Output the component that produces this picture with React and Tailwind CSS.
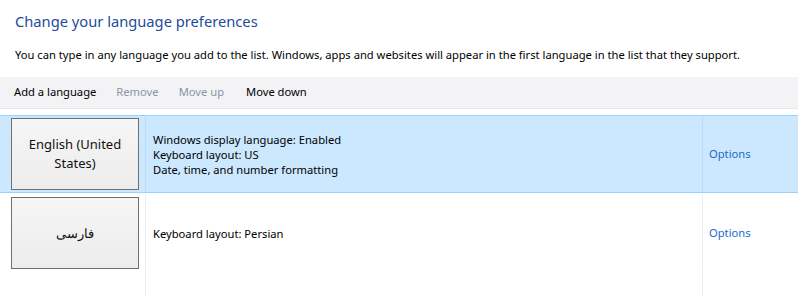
import React from 'react';

const font = { fontFamily: '"Noto Sans", "Liberation Sans", sans-serif' };

const LangRow = ({ name, lines, selected, rtl }) => {
  return (
    <div
      className={`flex h-[78px] border-y ${
        selected ? 'bg-[#cce8ff] border-[#99d1ff]' : 'bg-white border-transparent'
      }`}
    >
      <div className={`w-[146px] shrink-0 flex items-center pl-[11px] border-r ${selected ? 'border-[#b8dcfb]' : 'border-[#e3eff9]'}`}>
        <div className="w-[128px] h-[72px] border border-[#707070] bg-gradient-to-b from-[#f6f6f6] to-[#ececec] flex items-center justify-center text-center text-[13px] leading-[19px] text-[#111] px-3">
          <span dir={rtl ? 'rtl' : undefined}>{name}</span>
        </div>
      </div>
      <div className={`flex-1 flex flex-col justify-center pl-[7px] text-[11.2px] leading-[15px] text-black border-r ${selected ? 'border-[#b8dcfb]' : 'border-[#e3eff9]'}`}>
        {lines.map((l) => (
          <div key={l}>{l}</div>
        ))}
      </div>
      <div className="w-[95px] shrink-0 flex items-center pl-[6px] text-[11.2px] text-[#1e6ac9]">Options</div>
    </div>
  );
};

const App = () => {
  return (
    <div className="h-[296px] overflow-hidden bg-white flex flex-col" style={font}>
      <h1 className="text-[14.7px] leading-[22px] text-[#1e4c9c] pl-[15px] pt-[10px]">Change your language preferences</h1>
      <p className="text-[11.2px] leading-[16px] text-black pl-[15px] mt-[15px]">
        You can type in any language you add to the list. Windows, apps and websites will appear in the first language in the list that they support.
      </p>
      <div className="mt-[14px] h-[32px] bg-[#f3f3f5] border-b border-[#e6e6e6] flex items-center pl-[14px] text-[11.2px]">
        <span className="text-black">Add a language</span>
        <span className="text-[#8a96a8] ml-[20px]">Remove</span>
        <span className="text-[#8a96a8] ml-[20px]">Move up</span>
        <span className="text-black ml-[22px]">Move down</span>
      </div>
      <div className="mt-[6px] flex-1 flex flex-col">
        <LangRow
          selected
          name="English (United States)"
          lines={['Windows display language: Enabled', 'Keyboard layout: US', 'Date, time, and number formatting']}
        />
        <div className="pt-[1px] flex flex-col">
          <LangRow name="فارسی" rtl lines={['Keyboard layout: Persian']} />
        </div>
        <div className="flex-1 flex">
          <div className="w-[146px] border-r border-[#e3eff9]" />
          <div className="flex-1 border-r border-[#e3eff9]" />
          <div className="w-[95px]" />
        </div>
      </div>
    </div>
  );
};

export default App;
